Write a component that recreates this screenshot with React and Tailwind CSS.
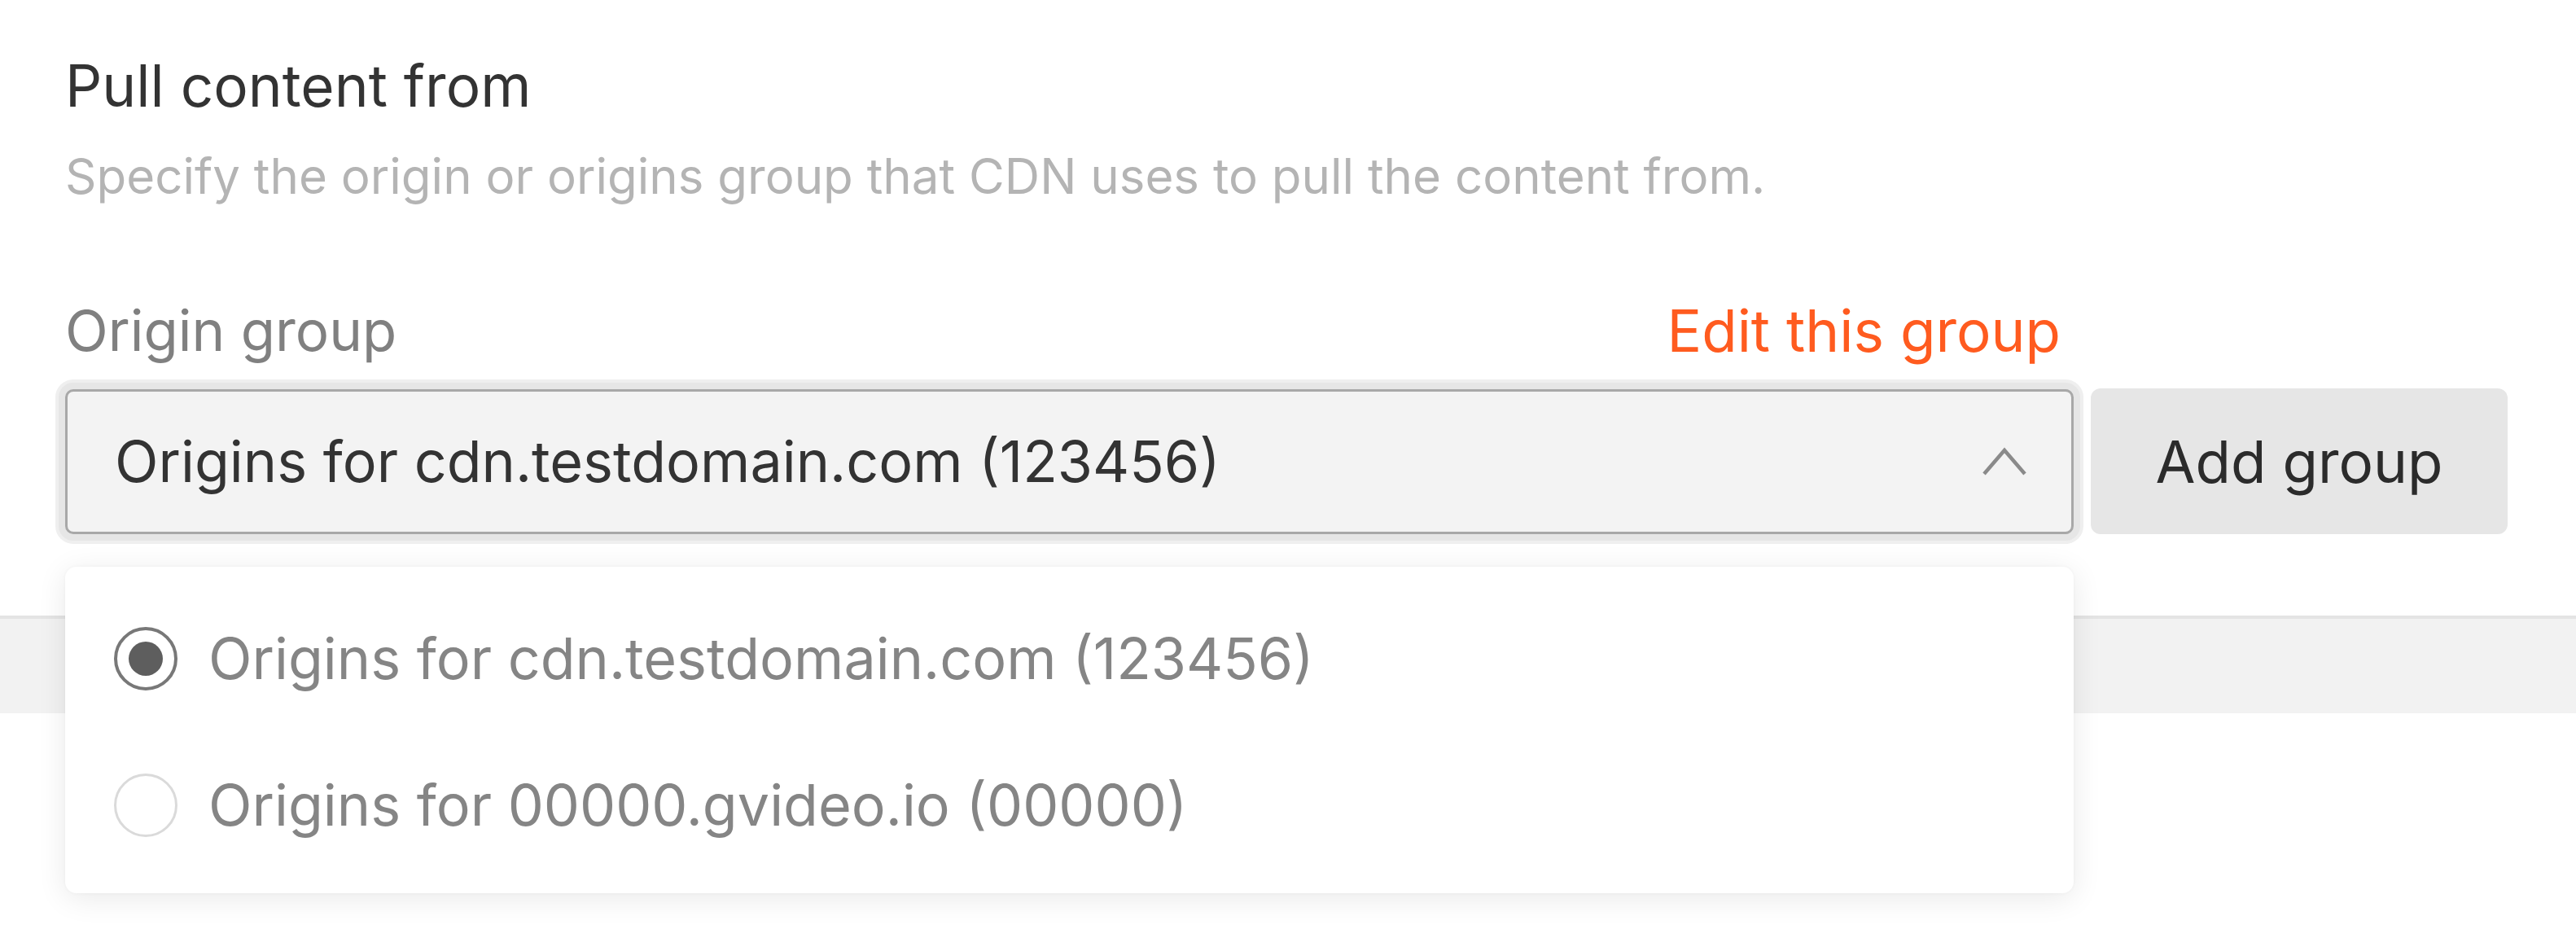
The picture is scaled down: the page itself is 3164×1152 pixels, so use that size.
import React from "react";

function Radio({ checked }) {
  if (checked) {
    return (
      <span className="flex h-[78px] w-[78px] shrink-0 items-center justify-center rounded-full border-[4px] border-[#787878] bg-white">
        <span className="h-[42px] w-[42px] rounded-full bg-[#5e5e5e]" />
      </span>
    );
  }
  return <span className="h-[78px] w-[78px] shrink-0 rounded-full border-[3px] border-[#dadada] bg-white" />;
}

export default function App() {
  const options = [
    { label: "Origins for cdn.testdomain.com (123456)", checked: true },
    { label: "Origins for 00000.gvideo.io (00000)", checked: false },
  ];
  return (
    <div className="min-h-screen w-full bg-white font-['Inter',sans-serif]">
      <div className="px-[80px] pt-[61px] pb-[100px]">
        <h2 className="text-[71px] font-normal leading-[88px] text-[#333333]">Pull content from</h2>
        <p className="mt-[32px] text-[60px] leading-[70px] text-[#b4b4b4]">
          Specify the origin or origins group that CDN uses to pull the content from.
        </p>
        <div className="mt-[111px] flex w-[2467px] items-center justify-between pr-[16px] leading-[88px]">
          <span className="text-[69px] text-[#808080]">Origin group</span>
          <span className="text-[71px] text-[#ff5b1f]">Edit this group</span>
        </div>
        <div className="mt-[27px] flex items-center gap-[21px]">
          <div className="relative w-[2467px]">
            <div className="flex h-[178px] items-center justify-between rounded-[10px] border-[3px] border-[#a8a8a8] bg-[#f3f3f3] pl-[58px] pr-[54px] shadow-[0_0_0_8px_#e6e6e6,0_0_0_12px_#efefef]">
              <span className="text-[70px] leading-[88px] text-[#333333]">Origins for cdn.testdomain.com (123456)</span>
              <svg width="56" height="36" viewBox="0 0 56 36" fill="none">
                <path d="M3 33 L28 4 L53 33" stroke="#8a8a8a" strokeWidth="4.5" strokeLinecap="butt" strokeLinejoin="miter" />
              </svg>
            </div>
            <div className="absolute left-0 top-full z-10 mt-[40px] w-full rounded-[14px] bg-white pt-[23px] pb-[18px] shadow-[0_6px_36px_rgba(0,0,0,0.09),0_0_4px_rgba(0,0,0,0.04)]">
              {options.map((o) => (
                <div key={o.label} className="flex h-[180px] items-center gap-[38px] pl-[60px]">
                  <Radio checked={o.checked} />
                  <span className="text-[70px] leading-[88px] text-[#858585]">{o.label}</span>
                </div>
              ))}
            </div>
          </div>
          <button className="h-[179px] w-[512px] rounded-[12px] bg-[#e6e6e6] text-[71px] leading-[88px] text-[#2b2b2b]">
            Add group
          </button>
        </div>
      </div>
      <div className="h-[120px] border-t-[4px] border-[#e4e4e4] bg-[#f2f2f2]" />
    </div>
  );
}
